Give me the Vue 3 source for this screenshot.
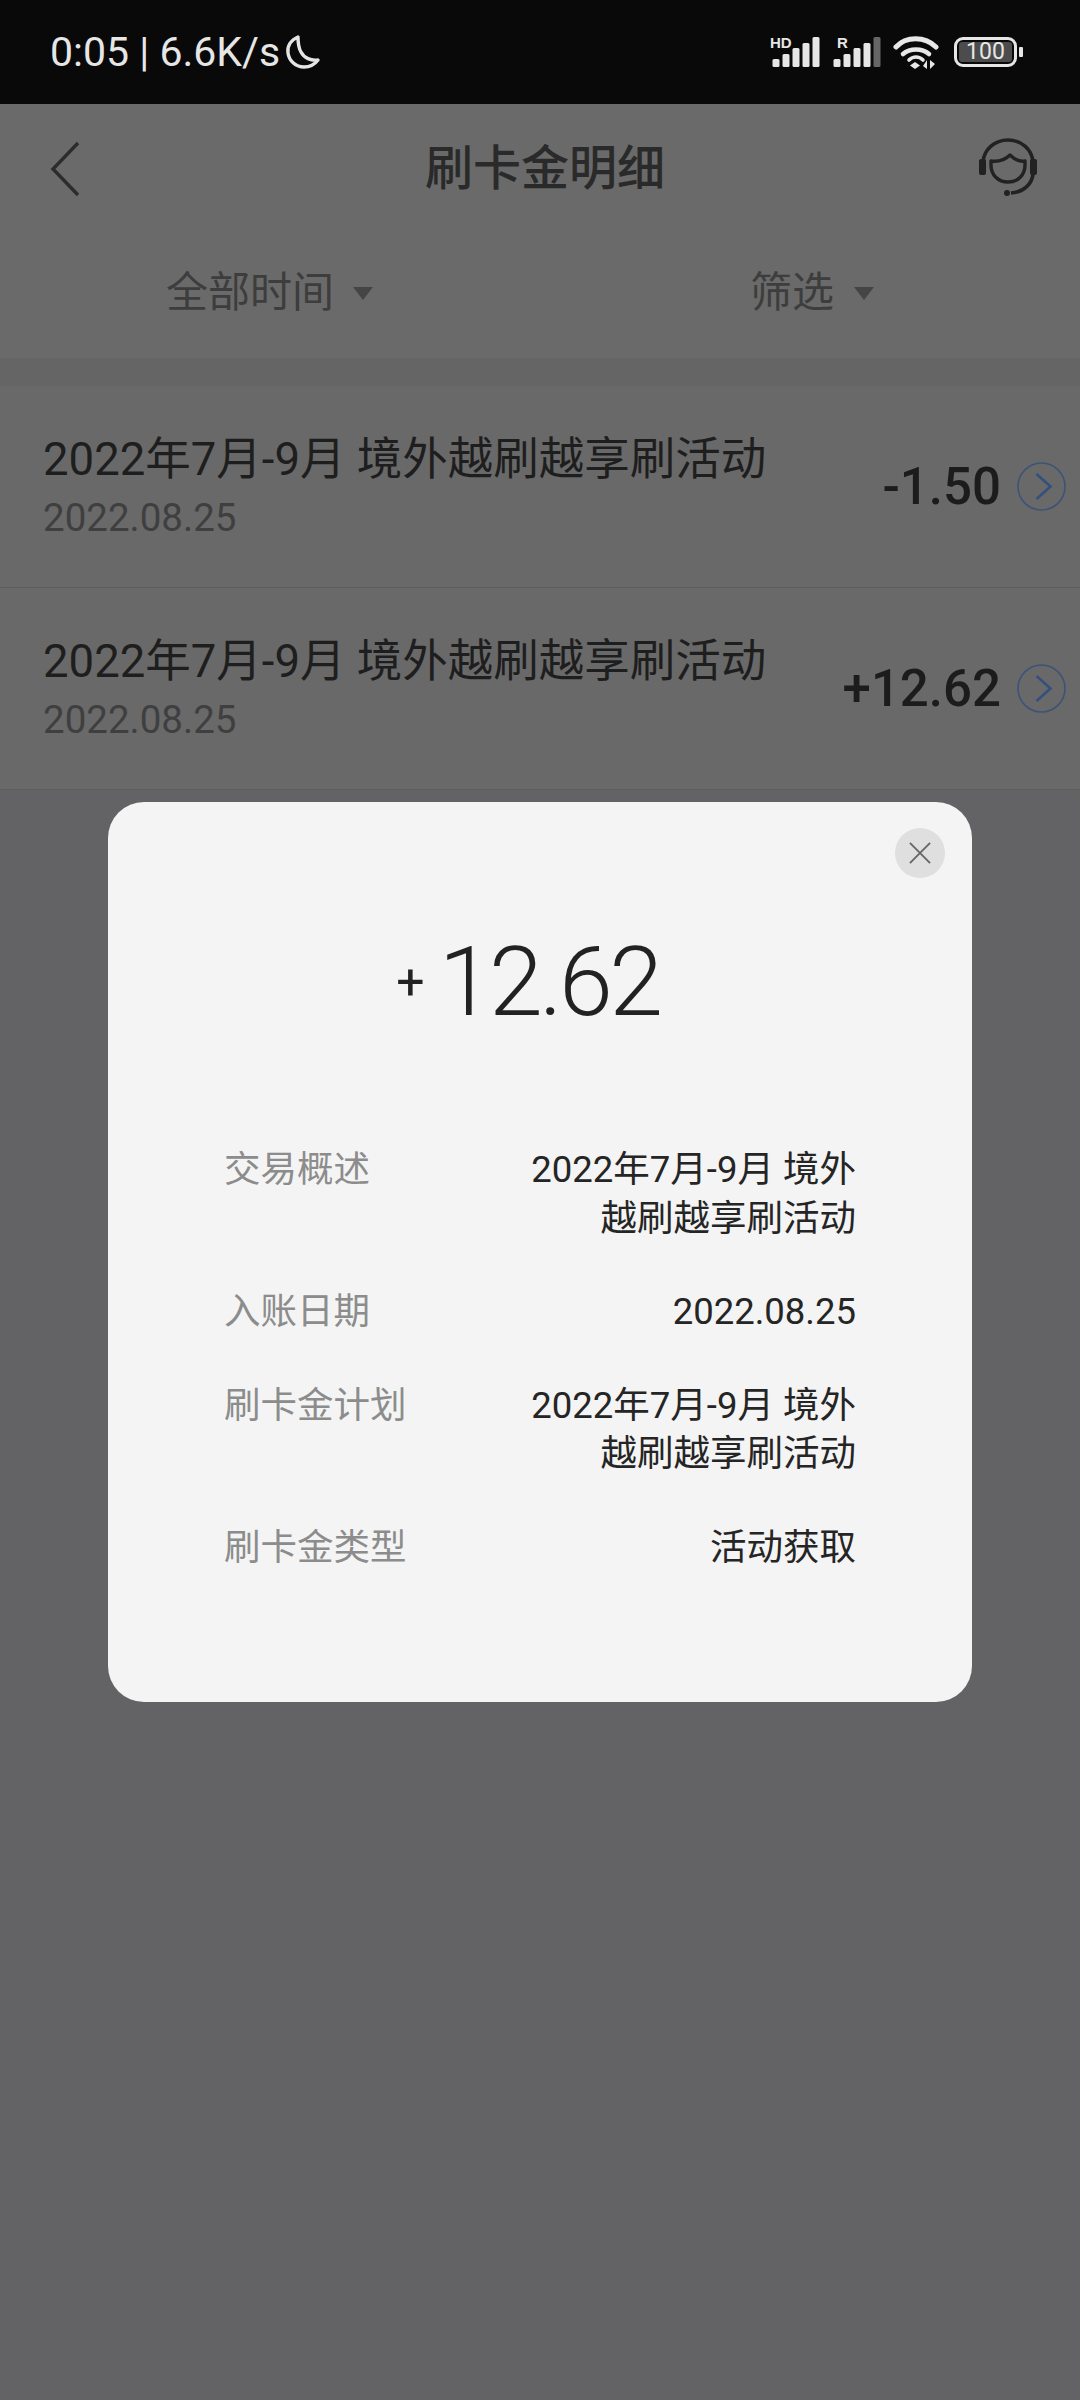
<script setup>
const rows = [
  { title: '2022年7月-9月 境外越刷越享刷活动', date: '2022.08.25', amount: '-1.50' },
  { title: '2022年7月-9月 境外越刷越享刷活动', date: '2022.08.25', amount: '+12.62' }
]
const details = [
  { label: '交易概述', lines: ['2022年7月-9月 境外', '越刷越享刷活动'] },
  { label: '入账日期', lines: ['2022.08.25'] },
  { label: '刷卡金计划', lines: ['2022年7月-9月 境外', '越刷越享刷活动'] },
  { label: '刷卡金类型', lines: ['活动获取'] }
]
const bars = [
  { x: 0, y: 22, h: 8 },
  { x: 10, y: 17, h: 13 },
  { x: 20, y: 11, h: 19 },
  { x: 30, y: 6, h: 24 },
  { x: 40, y: 0, h: 30 }
]
</script>

<template>
  <div class="screen">
    <div class="status">
      <div class="status-left">
        <span>0:05 | 6.6K/s</span>
        <svg class="moon" viewBox="0 0 36 36"><path d="M13 3C6 6 2 12 3 19c1 8 8 14 16 14 6 0 11-3 14-7-7 1-14-2-17-8-3-5-3-10-3-15z" fill="none" stroke="#e4e4e4" stroke-width="3.4" stroke-linejoin="round"/></svg>
      </div>
      <div class="status-right">
        <div class="signal">
          <span class="sig-label">HD</span>
          <svg viewBox="0 0 48 30"><rect v-for="b in bars" :key="b.x" :x="b.x + 0.5" :y="b.y" width="7" :height="b.h" rx="1.5" fill="#e6e6e6"/></svg>
        </div>
        <div class="signal sig-r">
          <span class="sig-label">R</span>
          <svg viewBox="0 0 48 30"><rect v-for="b in bars" :key="b.x" :x="b.x + 0.5" :y="b.y" width="7" :height="b.h" rx="1.5" :fill="b.x === 40 ? '#666' : '#e6e6e6'"/></svg>
        </div>
        <svg class="wifi" viewBox="0 0 46 33">
          <path d="M3 11C13 0 32 0 43 11" fill="none" stroke="#e8e8e8" stroke-width="5" stroke-linecap="round"/>
          <path d="M10 18c7-6 19-6 26 0" fill="none" stroke="#e8e8e8" stroke-width="4.6" stroke-linecap="round"/>
          <path d="M16 24c4-4 10-4 14 0" fill="none" stroke="#e8e8e8" stroke-width="3.6" stroke-linecap="round"/>
          <path d="M22 26l5 3.5-5 3.5-5-3.5z" fill="#e8e8e8"/>
          <path d="M34 24v9l-4-3zM37 33v-9l5 4z" fill="#e8e8e8"/>
        </svg>
        <div class="battery">
          <div class="batt-body"><span class="batt-fill">100</span></div>
          <span class="batt-cap"></span>
        </div>
      </div>
    </div>

    <header class="nav">
      <svg class="back" viewBox="0 0 34 58"><path d="M30 3L5 29l25 26" fill="none" stroke="#2c2c2c" stroke-width="3.4"/></svg>
      <h1 class="title">刷卡金明细</h1>
      <svg class="service" viewBox="0 0 58 58">
        <path d="M4 24C5 11 16 2 29 2s24 9 25 22v12c-1 10-9 18-22 19" fill="none" stroke="#222" stroke-width="3.6"/>
        <rect x="0" y="21" width="7" height="16" rx="2" fill="#222"/>
        <rect x="51" y="21" width="7" height="16" rx="2" fill="#222"/>
        <circle cx="28" cy="55" r="3" fill="#222"/>
        <path d="M12 23c8 1 14-1 19-6 5 5 9 7 15 6v4c0 10-7 17-17 17s-17-7-17-17z" fill="none" stroke="#222" stroke-width="3.4" stroke-linejoin="round"/>
      </svg>
    </header>

    <div class="filters">
      <div class="filter f-time"><span>全部时间</span><i class="caret"></i></div>
      <div class="filter f-pick"><span>筛选</span><i class="caret"></i></div>
    </div>

    <div class="band"></div>

    <div class="list">
      <div v-for="(r, i) in rows" :key="i" class="row">
        <div class="row-text">
          <div class="row-title">{{ r.title }}</div>
          <div class="row-date">{{ r.date }}</div>
        </div>
        <div class="row-amt">{{ r.amount }}</div>
        <svg class="row-arrow" viewBox="0 0 49 49">
          <circle cx="24.5" cy="24.5" r="23.5" fill="none" stroke="#3d5378" stroke-width="1.6"/>
          <path d="M19.5 12l14 12.5-14 12.5" fill="none" stroke="#34507f" stroke-width="2.6"/>
        </svg>
      </div>
    </div>

    <div class="modal">
      <button class="close">
        <svg viewBox="0 0 24 24"><path d="M1 1l22 22M23 1L1 23" stroke="#666" stroke-width="2" fill="none"/></svg>
      </button>
      <div class="big"><span class="plus">+</span><span class="big-num">12.62</span></div>
      <div class="details">
        <div v-for="d in details" :key="d.label" class="d-row">
          <div class="d-label">{{ d.label }}</div>
          <div class="d-val"><div v-for="l in d.lines" :key="l">{{ l }}</div></div>
        </div>
      </div>
    </div>
  </div>
</template>

<style>
html, body { margin: 0; padding: 0; background: #636365; }
</style>

<style scoped>
.screen {
  position: relative;
  width: 1080px;
  height: 2400px;
  overflow: hidden;
  background: #636365;
  font-family: "Roboto", "Noto Sans CJK SC", sans-serif;
}
.status {
  height: 104px;
  background: #090909;
  display: flex;
  align-items: center;
  justify-content: space-between;
  padding: 0 57px 0 50px;
  box-sizing: border-box;
  color: #e6e6e6;
}
.status-left { display: flex; align-items: center; gap: 5px; font-size: 41px; }
.moon { width: 36px; height: 36px; }
.status-right { display: flex; align-items: center; }
.signal { position: relative; width: 48px; height: 30px; }
.signal svg { width: 48px; height: 30px; display: block; }
.sig-label { position: absolute; left: -2px; top: -2px; font-size: 15px; font-weight: 700; font-family: "Liberation Sans", sans-serif; color: #e6e6e6; line-height: 1; }
.sig-r { margin-left: 13px; }
.sig-r .sig-label { left: 4px; }
.wifi { width: 46px; height: 33px; margin: 0 15px 0 12px; }
.battery { display: flex; align-items: center; gap: 2px; }
.batt-body { width: 63px; height: 30px; box-sizing: border-box; border: 3px solid #e6e6e6; border-radius: 9px; padding: 2px; display: flex; }
.batt-fill { flex: 1; background: #4c4c4c; border-radius: 3px; font-size: 23px; line-height: 20px; text-align: center; color: #e6e6e6; }
.batt-cap { width: 4px; height: 10px; background: #e6e6e6; border-radius: 1px; }

.nav {
  height: 130px;
  background: #6a6a6a;
  display: grid;
  grid-template-columns: 1fr auto 1fr;
  align-items: center;
  padding: 0 43px 0 48px;
  box-sizing: border-box;
}
.back { width: 34px; height: 58px; justify-self: start; }
.title { margin: 0 0 0 5px; font-size: 48px; font-weight: 500; color: #2a2a2a; line-height: 1; }
.service { width: 58px; height: 58px; justify-self: end; margin-bottom: 4px; }

.filters { position: relative; height: 124px; background: #6a6a6a; }
.filter { position: absolute; top: 31px; display: flex; align-items: center; color: #3d3d3d; font-size: 42px; line-height: 56px; }
.f-time { left: 166px; gap: 19px; }
.f-pick { left: 750px; gap: 20px; }
.caret { width: 0; height: 0; border-left: 10px solid transparent; border-right: 10px solid transparent; border-top: 13px solid #454545; }

.band { height: 28px; background: #656566; }
.list { background: #696969; }
.row {
  position: relative;
  height: 202px;
  display: flex;
  align-items: center;
  padding: 0 14px 0 43px;
  box-sizing: border-box;
  border-bottom: 1px solid #5e5e5e;
}
.row-text { flex: 1; margin-top: -4px; }
.row-title { font-size: 45.5px; line-height: 62px; color: #1e1e1e; white-space: nowrap; }
.row-date { font-size: 38.5px; line-height: 44px; color: #3f3f3f; margin-top: 5px; }
.row-amt { font-size: 51px; font-weight: 500; color: #1c1c1c; margin-right: 16px; }
.row-arrow { width: 49px; height: 49px; }

.modal {
  position: absolute;
  left: 108px;
  top: 802px;
  width: 864px;
  height: 900px;
  background: #f4f4f4;
  border-radius: 36px;
}
.close {
  position: absolute;
  top: 26px;
  right: 27px;
  width: 50px;
  height: 50px;
  border: 0;
  padding: 14px;
  border-radius: 50%;
  background: #dfdfdf;
  box-sizing: border-box;
}
.close svg { display: block; width: 22px; height: 22px; }
.big { display: flex; align-items: center; justify-content: center; height: 100px; margin-top: 130px; color: #222; padding-right: 24px; }
.big-num { font-size: 97px; font-weight: 300; letter-spacing: -3.5px; }
.plus { font-size: 50px; margin-right: 14px; font-weight: 400; }
.details { margin: 114px 116px 0; }
.d-row { display: flex; justify-content: space-between; margin-bottom: 45px; font-size: 36.5px; line-height: 48.5px; }
.d-label { color: #8c8c8c; }
.d-val { color: #252525; text-align: right; }
</style>
